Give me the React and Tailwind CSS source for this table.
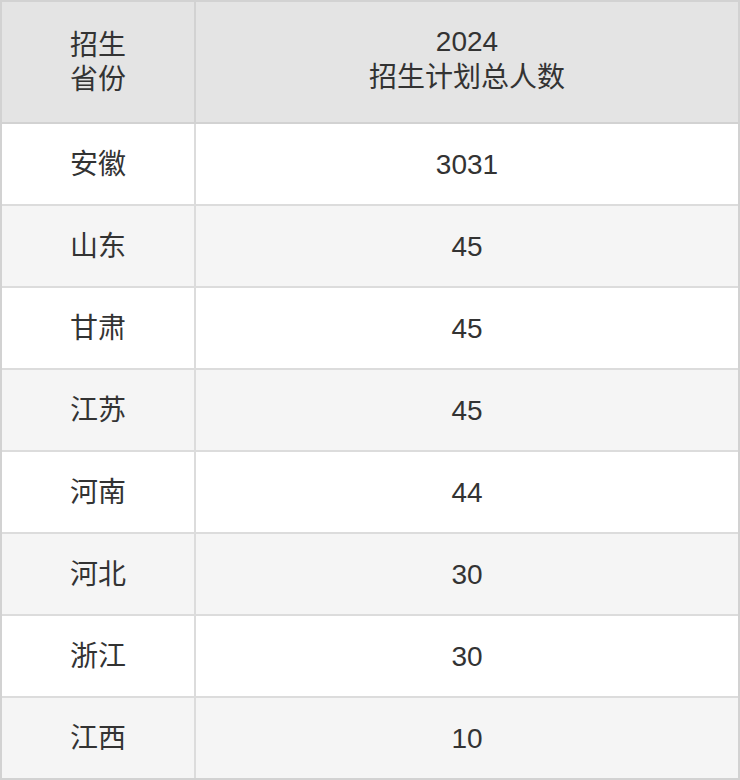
import React from 'react';

const rows = [
    ['安徽', '3031'],
    ['山东', '45'],
    ['甘肃', '45'],
    ['江苏', '45'],
    ['河南', '44'],
    ['河北', '30'],
    ['浙江', '30'],
    ['江西', '10'],
];

export default function App() {
    return (
        <div
            className="w-[740px] bg-white text-[#333333] text-[28px] leading-[35px]"
            style={{ fontFamily: '"Liberation Sans", "Noto Sans CJK SC", sans-serif' }}
        >
            <div className="border-2 border-[#d2d2d2]">
                {/* Header */}
                <div className="flex h-[122px] bg-[#e4e4e4] border-b-2 border-[#d2d2d2]">
                    <div className="w-[194px] shrink-0 border-r-2 border-[#d2d2d2] flex flex-col items-center justify-center leading-[34px] pt-[1px]">
                        <span>招生</span>
                        <span>省份</span>
                    </div>
                    <div className="flex-1 flex flex-col items-center justify-center leading-[36px] pb-[4px]">
                        <span>2024</span>
                        <span>招生计划总人数</span>
                    </div>
                </div>

                {/* Body rows */}
                {rows.map(([prov, num], i) => (
                    <div
                        key={prov + i}
                        className={
                            'flex ' +
                            (i % 2 === 1 ? 'bg-[#f5f5f5] ' : 'bg-white ') +
                            (i < rows.length - 1 ? 'h-[82px] border-b-2 border-[#dcdcdc]' : 'h-[80px]')
                        }
                    >
                        <div className="w-[194px] shrink-0 border-r-2 border-[#dcdcdc] flex items-center justify-center">
                            {prov}
                        </div>
                        <div className="flex-1 flex items-center justify-center">{num}</div>
                    </div>
                ))}
            </div>
        </div>
    );
}
